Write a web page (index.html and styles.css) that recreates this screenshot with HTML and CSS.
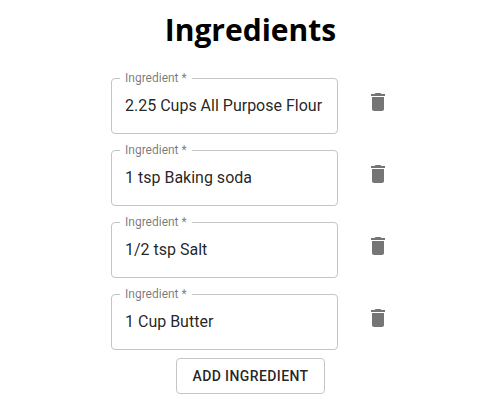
FILE: index.html
```html
<!DOCTYPE html>
<html lang="en">
<head>
<meta charset="utf-8">
<title>Ingredients</title>
<link rel="stylesheet" href="styles.css">
</head>
<body>
<main class="ingredients">
  <h1 class="title">Ingredients</h1>
  <form class="form">
    <div class="row">
      <div class="field">
        <label class="label" for="ingredient-1">Ingredient *</label>
        <input class="input" id="ingredient-1" type="text" required value="2.25 Cups All Purpose Flour">
      </div>
      <button class="delete" type="button" aria-label="Delete ingredient"><svg class="icon" viewBox="0 0 24 24"><path d="M6 19c0 1.1.9 2 2 2h8c1.1 0 2-.9 2-2V7H6v12zM19 4h-3.5l-1-1h-5l-1 1H5v2h14V4z"/></svg></button>
    </div>
    <div class="row">
      <div class="field">
        <label class="label" for="ingredient-2">Ingredient *</label>
        <input class="input" id="ingredient-2" type="text" required value="1 tsp Baking soda">
      </div>
      <button class="delete" type="button" aria-label="Delete ingredient"><svg class="icon" viewBox="0 0 24 24"><path d="M6 19c0 1.1.9 2 2 2h8c1.1 0 2-.9 2-2V7H6v12zM19 4h-3.5l-1-1h-5l-1 1H5v2h14V4z"/></svg></button>
    </div>
    <div class="row">
      <div class="field">
        <label class="label" for="ingredient-3">Ingredient *</label>
        <input class="input" id="ingredient-3" type="text" required value="1/2 tsp Salt">
      </div>
      <button class="delete" type="button" aria-label="Delete ingredient"><svg class="icon" viewBox="0 0 24 24"><path d="M6 19c0 1.1.9 2 2 2h8c1.1 0 2-.9 2-2V7H6v12zM19 4h-3.5l-1-1h-5l-1 1H5v2h14V4z"/></svg></button>
    </div>
    <div class="row">
      <div class="field">
        <label class="label" for="ingredient-4">Ingredient *</label>
        <input class="input" id="ingredient-4" type="text" required value="1 Cup Butter">
      </div>
      <button class="delete" type="button" aria-label="Delete ingredient"><svg class="icon" viewBox="0 0 24 24"><path d="M6 19c0 1.1.9 2 2 2h8c1.1 0 2-.9 2-2V7H6v12zM19 4h-3.5l-1-1h-5l-1 1H5v2h14V4z"/></svg></button>
    </div>
    <button class="add" type="button">Add Ingredient</button>
  </form>
</main>
</body>
</html>
```
FILE: styles.css
```css
* {
  box-sizing: border-box;
}

body {
  margin: 0;
  background: #fff;
  color: rgba(0, 0, 0, 0.87);
  font-family: Roboto, sans-serif;
}

.ingredients {
  padding: 8px 0 16px 15px;
}

.title {
  margin: 0 0 26px;
  color: #000;
  font: 700 30px/44px "Open Sans", "Noto Sans", sans-serif;
  text-align: center;
}

.form {
  display: flex;
  flex-direction: column;
  align-items: center;
  gap: 16px;
}

.row {
  display: flex;
  gap: 16px;
  padding-left: 12px;
}

.field {
  position: relative;
  width: 227px;
}

.label {
  position: absolute;
  top: -8px;
  left: 9px;
  padding: 0 5px;
  background: #fff;
  color: rgba(0, 0, 0, 0.54);
  font-size: 12px;
  line-height: 16px;
}

.input {
  display: block;
  width: 100%;
  height: 56px;
  padding: 0 13px 2px;
  border: 1px solid #c4c4c4;
  border-radius: 4px;
  background: transparent;
  color: inherit;
  font: 16px/20px Roboto, sans-serif;
}

.delete {
  display: flex;
  align-items: center;
  justify-content: center;
  width: 48px;
  height: 48px;
  padding: 0;
  border: 0;
  border-radius: 50%;
  background: transparent;
  color: rgba(0, 0, 0, 0.54);
}

.icon {
  width: 24px;
  height: 24px;
  fill: currentColor;
}

.add {
  margin-top: -8px;
  padding: 5px 15px;
  border: 1px solid #c4c4c4;
  border-radius: 4px;
  background: transparent;
  color: inherit;
  font: 500 14px/24px Roboto, sans-serif;
  letter-spacing: 0.4px;
  text-transform: uppercase;
}
```
